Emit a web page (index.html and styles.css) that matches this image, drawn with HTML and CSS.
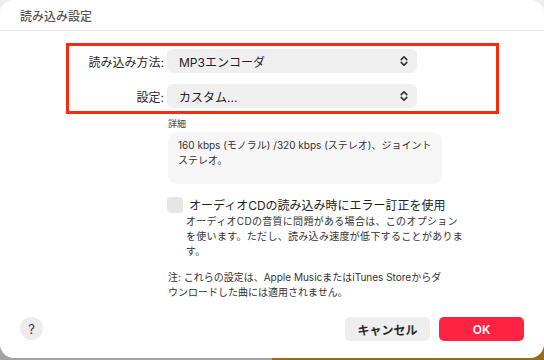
FILE: index.html
```html
<!DOCTYPE html>
<html lang="ja">
<head>
<meta charset="utf-8">
<title>読み込み設定</title>
<link rel="stylesheet" href="styles.css">
</head>
<body>
<div class="window">
  <header class="titlebar">読み込み設定</header>
  <main class="content">
    <section class="highlight">
      <div class="row">
        <span class="label">読み込み方法:</span>
        <div class="select">
          <span>MP3エンコーダ</span>
          <svg class="chev" viewBox="0 0 8 12" width="8" height="12"><path d="M1.2 4.6 L4 1.8 L6.8 4.6 M1.2 7.4 L4 10.2 L6.8 7.4" fill="none" stroke="#2a2a2a" stroke-width="1.5" stroke-linecap="round" stroke-linejoin="round"/></svg>
        </div>
      </div>
      <div class="row">
        <span class="label">設定:</span>
        <div class="select">
          <span>カスタム...</span>
          <svg class="chev" viewBox="0 0 8 12" width="8" height="12"><path d="M1.2 4.6 L4 1.8 L6.8 4.6 M1.2 7.4 L4 10.2 L6.8 7.4" fill="none" stroke="#2a2a2a" stroke-width="1.5" stroke-linecap="round" stroke-linejoin="round"/></svg>
        </div>
      </div>
    </section>
    <section class="column">
      <div class="details-label">詳細</div>
      <div class="details">160 kbps (モノラル) /320 kbps (ステレオ)、ジョイント<br>ステレオ。</div>
      <div class="check-row">
        <span class="checkbox"></span>
        <span class="check-label">オーディオCDの読み込み時にエラー訂正を使用</span>
      </div>
      <p class="desc">オーディオCDの音質に問題がある場合は、このオプション<br>を使います。ただし、読み込み速度が低下することがありま<br>す。</p>
      <p class="note">注: これらの設定は、Apple MusicまたはiTunes Storeからダ<br>ウンロードした曲には適用されません。</p>
    </section>
  </main>
  <footer class="footer">
    <button class="help">?</button>
    <div class="actions">
      <button class="btn cancel">キャンセル</button>
      <button class="btn ok">OK</button>
    </div>
  </footer>
</div>
</body>
</html>
```

FILE: styles.css
```css
html {
  margin: 0;
  height: 100%;
  background:
    linear-gradient(#ededed 0 50%, transparent 50%),
    linear-gradient(to right, #a3a3a3 50%, #9a6a1c 50%);
}
body {
  margin: 0;
  font-family: "Inter", "Noto Sans CJK JP", sans-serif;
  color: #222;
}
.window {
  width: 544px;
  height: 358px;
  background: #fff;
  border-radius: 14px;
  display: flex;
  flex-direction: column;
  overflow: hidden;
}
.titlebar {
  height: 31px;
  box-sizing: border-box;
  border-bottom: 1px solid #e3e3e3;
  padding-left: 20px;
  display: flex;
  align-items: center;
  font-size: 12px;
  font-weight: 500;
  color: #555;
}
.content {
  flex: 1;
  display: flex;
  flex-direction: column;
}
.highlight {
  margin: 12px 0 0 66px;
  width: 433px;
  box-sizing: border-box;
  border: 3px solid #fb2a0e;
  padding: 3px 0 3px 0;
  display: flex;
  flex-direction: column;
  gap: 11px;
}
.row {
  display: flex;
  align-items: center;
}
.label {
  width: 95px;
  text-align: right;
  font-size: 12px;
  color: #2a2a2a;
  margin-right: 3px;
  white-space: nowrap;
}
.select {
  width: 250px;
  height: 24px;
  background: #efefef;
  border-radius: 6px;
  display: flex;
  align-items: center;
  justify-content: space-between;
  padding: 0 9px 0 12px;
  box-sizing: border-box;
  font-size: 12px;
  color: #222;
}
.column {
  margin-left: 168px;
  display: flex;
  flex-direction: column;
}
.details-label {
  margin-top: 4px;
  font-size: 9px;
  line-height: 12px;
  color: #444;
}
.details {
  margin-top: 2px;
  width: 274px;
  height: 52px;
  box-sizing: border-box;
  background: #f6f6f6;
  border-radius: 9px;
  padding: 6px 10px;
  font-size: 10px;
  line-height: 15px;
  color: #333;
}
.check-row {
  margin-top: 12px;
  display: flex;
  align-items: center;
  gap: 6px;
  margin-left: -1px;
}
.checkbox {
  width: 16px;
  height: 16px;
  border-radius: 4px;
  background: #e6e6e6;
}
.check-label {
  font-size: 12px;
  color: #222;
}
.desc {
  margin: 1px 0 0 18px;
  font-size: 10px;
  line-height: 15px;
  color: #333;
  letter-spacing: 0.3px;
  white-space: nowrap;
}
.note {
  margin: 11px 0 0 0;
  font-size: 10px;
  line-height: 15px;
  color: #333;
  white-space: nowrap;
}
.footer {
  height: 41px;
  display: flex;
  align-items: flex-start;
  justify-content: space-between;
  padding: 0 20px 0 20px;
}
.help {
  width: 23px;
  height: 23px;
  border-radius: 50%;
  border: none;
  background: #ececec;
  font-family: "Inter", sans-serif;
  font-size: 13px;
  color: #333;
  padding: 0;
}
.actions {
  display: flex;
  gap: 9px;
}
.btn {
  height: 24px;
  border: none;
  border-radius: 5px;
  font-family: "Inter", "Noto Sans CJK JP", sans-serif;
  font-size: 12px;
  font-weight: 600;
  padding: 0;
}
.cancel {
  width: 85px;
  background: #eeeeee;
  color: #2a2a2a;
}
.ok {
  width: 85px;
  background: #fe2340;
  color: #fff;
}
```
